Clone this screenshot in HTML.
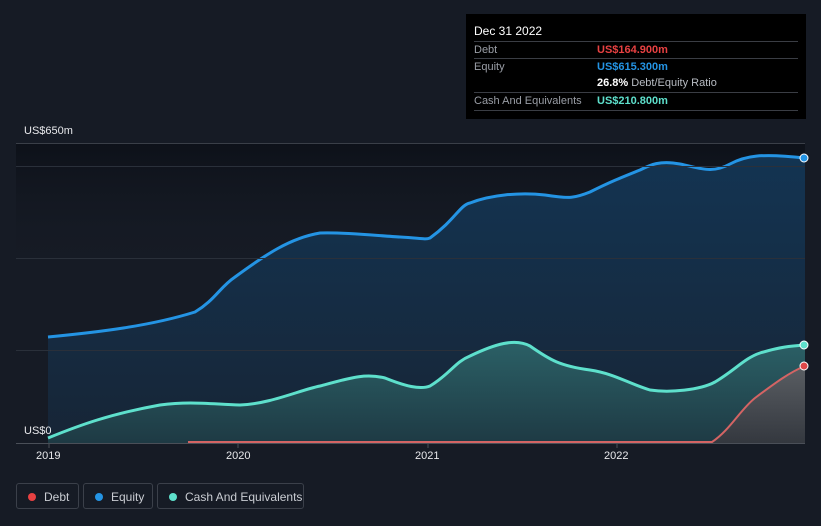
<!DOCTYPE html>
<html><head><style>
html,body{margin:0;padding:0;background:#161b25;width:821px;height:526px;overflow:hidden;font-family:"Liberation Sans",Arial,sans-serif}
.tip{position:absolute;left:466px;top:14px;width:340px;height:105px;background:#000;color:#fff;font-size:11px}
.tip .h{position:absolute;left:8px;top:10px;font-size:12px}
.row{position:absolute;left:8px;width:324px;border-top:1px solid #3a3d44;height:17px;line-height:17px}
.row .l{position:absolute;left:0;color:#9a9ea6}
.row .v{position:absolute;left:123px;font-weight:bold}
.leg{position:absolute;top:483px;height:26px;border:1px solid #3b404a;border-radius:3px;color:#c9ccd2;font-size:12px;line-height:26px;box-sizing:border-box}
.leg i{position:absolute;left:11px;top:9px;width:8px;height:8px;border-radius:50%}
.leg span{position:absolute;left:27px}
.ax{position:absolute;color:#e8e9ec;font-size:11px}
</style></head><body>
<svg width="821" height="526" style="position:absolute;left:0;top:0">
<defs>
<linearGradient id="top" x1="0" y1="0" x2="0" y2="1"><stop offset="0" stop-color="#0d1119"/><stop offset="1" stop-color="#161b25" stop-opacity="0"/></linearGradient>
<linearGradient id="eq" x1="0" y1="0" x2="0" y2="1"><stop offset="0" stop-color="#133452"/><stop offset="1" stop-color="#172536"/></linearGradient>
<linearGradient id="ca" x1="0" y1="0" x2="0" y2="1"><stop offset="0" stop-color="#2b6066"/><stop offset="1" stop-color="#1e3a44"/></linearGradient>
<linearGradient id="de" x1="0" y1="0" x2="0" y2="1"><stop offset="0" stop-color="#5a5e63"/><stop offset="1" stop-color="#34383f"/></linearGradient>
</defs>
<rect x="16" y="143" width="789" height="130" fill="url(#top)"/>
<path d="M48,337 C100,332 150,326 195,312 C215,300 220,287 235,277 C265,255 290,238 320,233 C345,232 380,236 400,237 C420,238 425,240 430,238 C455,220 460,205 470,203 C490,195 520,192 545,195 C570,199 575,198 590,192 C610,182 620,178 640,170 C650,165 660,160 680,164 C700,168 712,174 730,164 C745,156 760,153 805,158 L805,443 L48,443 Z" fill="url(#eq)"/>
<path d="M48,337 C100,332 150,326 195,312 C215,300 220,287 235,277 C265,255 290,238 320,233 C345,232 380,236 400,237 C420,238 425,240 430,238 C455,220 460,205 470,203 C490,195 520,192 545,195 C570,199 575,198 590,192 C610,182 620,178 640,170 C650,165 660,160 680,164 C700,168 712,174 730,164 C745,156 760,153 805,158" fill="none" stroke="#2494e4" stroke-width="3"/>
<g stroke="#2a303a" stroke-width="1"><line x1="16" y1="143.5" x2="805" y2="143.5" stroke="#3a3f48"/><line x1="16" y1="166.5" x2="805" y2="166.5"/><line x1="16" y1="258.5" x2="805" y2="258.5"/><line x1="16" y1="350.5" x2="805" y2="350.5"/></g>
<path d="M48,438 C80,425 110,414 160,405 C190,401 210,404 240,405 C270,404 300,390 320,386 C350,378 365,373 385,378 C405,386 420,390 430,386 C450,374 455,362 470,356 C495,344 515,338 530,346 C550,360 560,366 590,370 C615,374 625,382 650,390 C670,393 700,390 715,382 C735,370 745,358 760,353 C780,347 790,346 805,345 L805,443 L48,443 Z" fill="url(#ca)"/>
<path d="M48,438 C80,425 110,414 160,405 C190,401 210,404 240,405 C270,404 300,390 320,386 C350,378 365,373 385,378 C405,386 420,390 430,386 C450,374 455,362 470,356 C495,344 515,338 530,346 C550,360 560,366 590,370 C615,374 625,382 650,390 C670,393 700,390 715,382 C735,370 745,358 760,353 C780,347 790,346 805,345" fill="none" stroke="#5ee0cc" stroke-width="3"/>
<path d="M188,442 L712,442 C730,430 740,410 755,398 C775,383 790,372 805,366 L805,443 L188,443 Z" fill="url(#de)"/>
<path d="M188,442 L712,442 C730,430 740,410 755,398 C775,383 790,372 805,366" fill="none" stroke="#d46464" stroke-width="2"/>
<line x1="16" y1="443.5" x2="805" y2="443.5" stroke="#4a4f58"/>
<g stroke="#4a4f58"><line x1="49" y1="444" x2="49" y2="448"/><line x1="238" y1="444" x2="238" y2="448"/><line x1="428" y1="444" x2="428" y2="448"/><line x1="617" y1="444" x2="617" y2="448"/></g>
<circle cx="804" cy="158" r="4" fill="#2494e4" stroke="#fff" stroke-width="1"/>
<circle cx="804" cy="345" r="4" fill="#5ee0cc" stroke="#fff" stroke-width="1"/>
<circle cx="804" cy="366" r="4" fill="#e04848" stroke="#fff" stroke-width="1"/>
</svg>
<div class="ax" style="left:24px;top:125px">US$650m</div>
<div class="ax" style="left:24px;top:425px">US$0</div>
<div class="ax" style="left:36px;top:450px">2019</div>
<div class="ax" style="left:226px;top:450px">2020</div>
<div class="ax" style="left:415px;top:450px">2021</div>
<div class="ax" style="left:604px;top:450px">2022</div>
<div class="tip">
<div class="h">Dec 31 2022</div>
<div class="row" style="top:27px"><span class="l">Debt</span><span class="v" style="color:#e84142">US$164.900m</span></div>
<div class="row" style="top:44px"><span class="l">Equity</span><span class="v" style="color:#2494e4">US$615.300m</span></div>
<div class="row" style="top:61px;border-top:none"><span class="v" style="color:#fff">26.8% <span style="font-weight:normal;color:#b8bcc3">Debt/Equity Ratio</span></span></div>
<div class="row" style="top:78px"><span class="l">Cash And Equivalents</span><span class="v" style="color:#5ee0cc">US$210.800m</span></div>
<div class="row" style="top:96px;height:0"></div>
</div>
<div class="leg" style="left:16px;width:63px"><i style="background:#e84142"></i><span>Debt</span></div>
<div class="leg" style="left:83px;width:70px"><i style="background:#2494e4"></i><span>Equity</span></div>
<div class="leg" style="left:157px;width:147px"><i style="background:#5ee0cc"></i><span>Cash And Equivalents</span></div>
</body></html>
